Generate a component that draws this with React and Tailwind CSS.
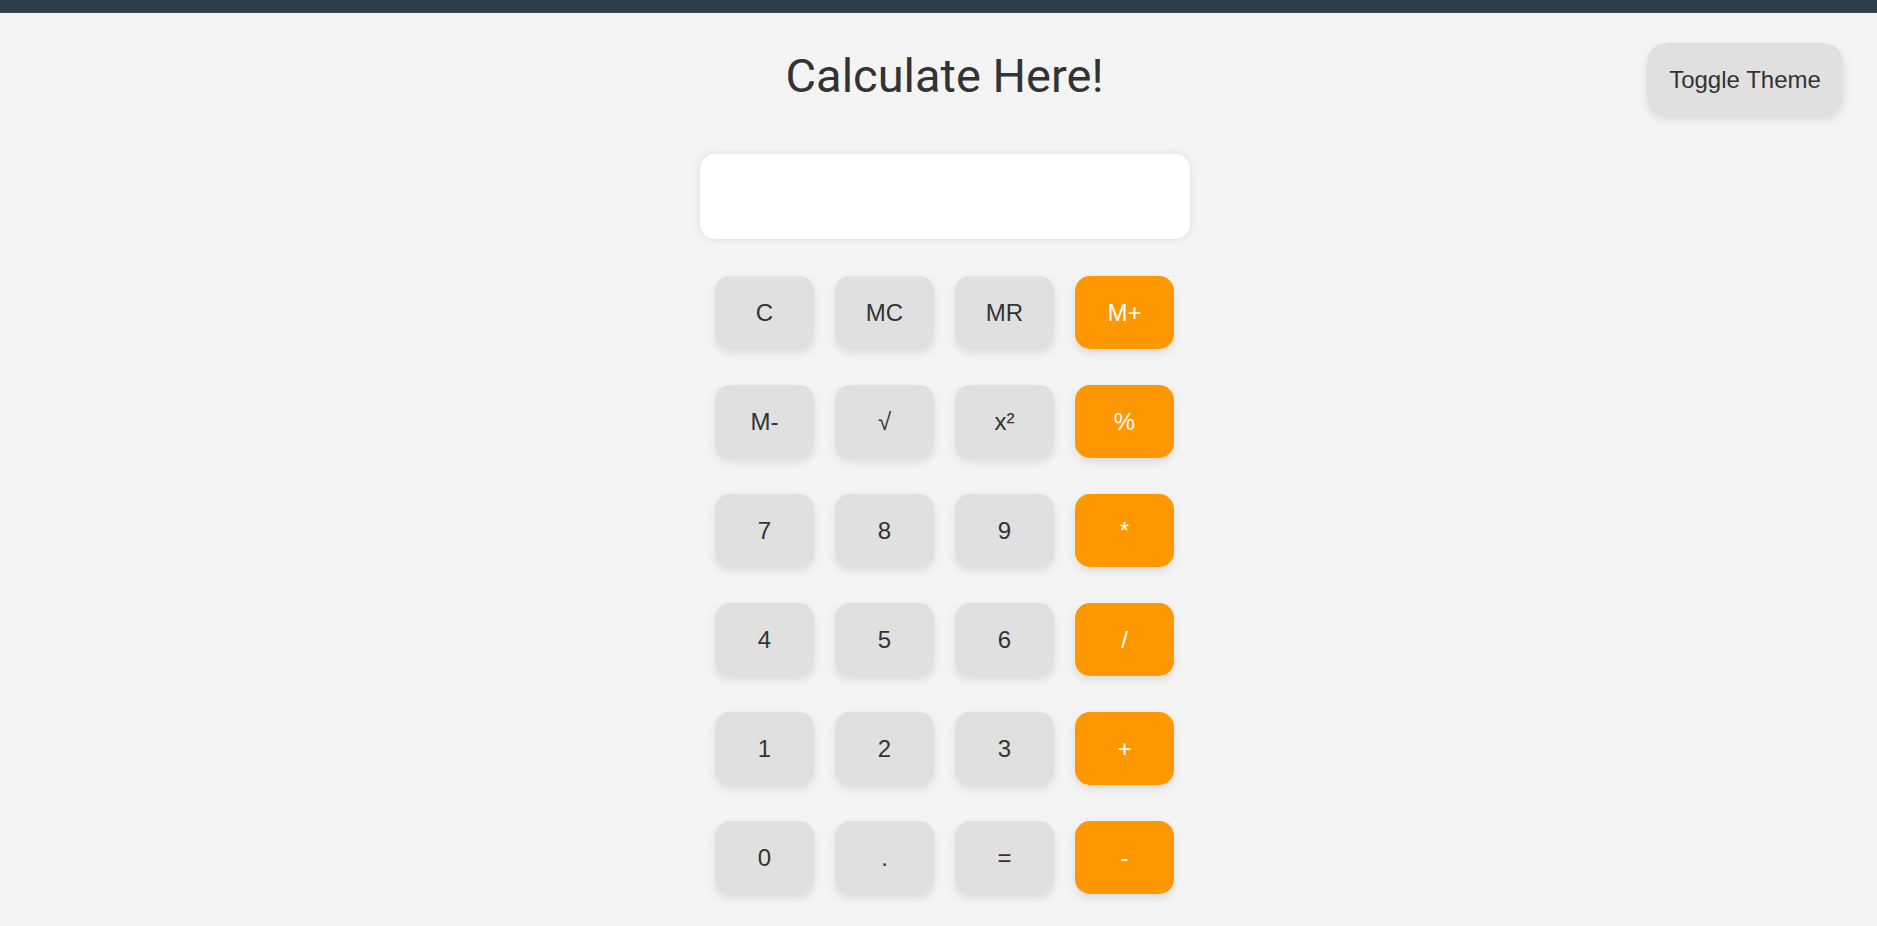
import React from "react";

const rows = [
  ["C", "MC", "MR", "M+"],
  ["M-", "√", "x²", "%"],
  ["7", "8", "9", "*"],
  ["4", "5", "6", "/"],
  ["1", "2", "3", "+"],
  ["0", ".", "=", "-"],
];

export default function App() {
  return (
    <div className="relative min-h-screen bg-[#f4f4f4] font-['Liberation_Sans',Arial,sans-serif] text-[#333]">
      <div className="h-[13px] bg-[#2c3e4a] border-b border-[#3c4f5a]" />
      <button className="absolute top-[43px] right-[34px] w-[196px] h-[73px] rounded-[20px] bg-[#e0e0e0] text-[24px] text-[#333] shadow-[0_4px_10px_rgba(0,0,0,0.1)]">
        Toggle Theme
      </button>
      <div className="flex flex-col items-center pl-[12px]">
        <h1 className="mt-[35px] font-['Roboto',sans-serif] text-[47px] leading-[56px] font-normal text-[#333]">
          Calculate Here!
        </h1>
        <div className="mt-[50px] w-[490px] h-[85px] rounded-[15px] bg-white shadow-[0_0_8px_rgba(0,0,0,0.1)]" />
        <div className="mt-[37px] grid grid-cols-[repeat(4,99px)] gap-x-[21px] gap-y-[36px]">
          {rows.flat().map((k, i) => {
            const op = i % 4 === 3;
            return (
              <button
                key={i}
                className={
                  op
                    ? "h-[73px] rounded-[15px] bg-[#ff9800] text-white text-[24px] shadow-[0_4px_10px_rgba(0,0,0,0.1)]"
                    : "h-[73px] rounded-[15px] bg-[#e0e0e0] text-[#333] text-[24px] shadow-[0_4px_10px_rgba(0,0,0,0.1)]"
                }
              >
                {k}
              </button>
            );
          })}
        </div>
      </div>
    </div>
  );
}
